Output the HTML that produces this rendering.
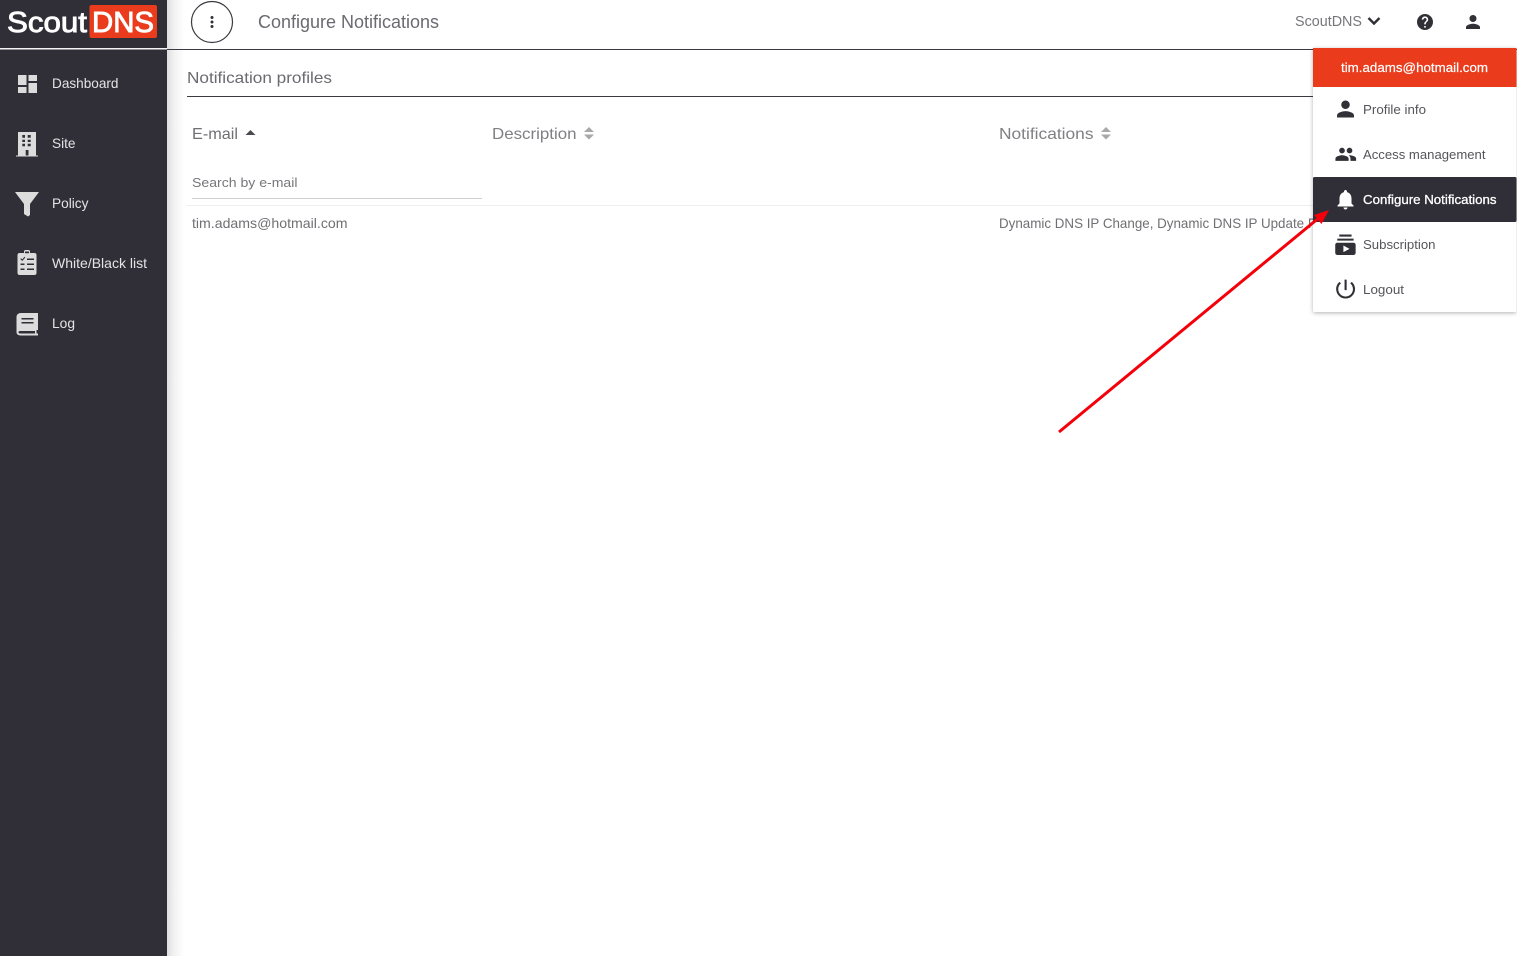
<!DOCTYPE html>
<html lang="en"><head><meta charset="utf-8"><title>Configure Notifications</title>
<style>
html,body{margin:0;padding:0;background:#fff;width:1517px;height:956px;overflow:hidden}
svg{display:block;position:absolute;left:0;top:0}
text{font-family:"Liberation Sans",sans-serif;font-size:14px;fill:#5c5c60}
.nav{fill:#e4e4e6;font-size:14px}
.ic{fill:#dcdcdc}
.m{fill:#55555a;font-size:13px}
.d{fill:#303036}
</style></head><body>
<svg width="1517" height="956" viewBox="0 0 1517 956" xmlns="http://www.w3.org/2000/svg">
<defs>
<linearGradient id="sh" x1="0" x2="1" y1="0" y2="0"><stop offset="0" stop-color="#000" stop-opacity=".13"/><stop offset=".4" stop-color="#000" stop-opacity=".05"/><stop offset="1" stop-color="#000" stop-opacity="0"/></linearGradient>
<filter id="ms" x="-10%" y="-10%" width="120%" height="120%"><feDropShadow dx="0" dy="1" stdDeviation="2" flood-color="#000" flood-opacity=".3"/></filter>
<clipPath id="rowclip"><rect x="990" y="205" width="323" height="40"/></clipPath>
</defs>
<rect x="167" y="0" width="18" height="956" fill="url(#sh)"/>
<rect x="0" y="0" width="167" height="956" fill="#302f37"/>
<rect x="0" y="48" width="167" height="1.5" fill="#f4f4f4"/>
<rect x="167" y="49" width="1350" height="1" fill="#3a3a40"/>

<!-- logo -->
<text x="7" y="32" textLength="80" lengthAdjust="spacingAndGlyphs" style="fill:#fff;font-size:29px;stroke:#fff;stroke-width:.9">Scout</text>
<rect x="89.500" y="5" width="67.500" height="33" rx="2" fill="#ea3c1c"/>
<text x="92" y="32" textLength="62" lengthAdjust="spacingAndGlyphs" style="fill:#fff;font-size:29px;stroke:#fff;stroke-width:.9">DNS</text>

<!-- nav icons -->
<path class="ic" d="M18 85h8.500V75H18zm0 8h8.500v-6H18zm10.500 0H37V83h-8.500zm0-18v6H37v-6z"/>
<path class="ic" fill-rule="evenodd" d="M18 132h18v23.500h2v1H16v-1h2zM22.300 135v2.700H25V135zm5.400 0v2.700h3V135zM22.300 139.700v2.300H25v-2.300zm5.400 0v2.300h3v-2.300zM22.300 143.700v2.500H25v-2.500zm5.400 0v2.500h3v-2.500zM25.700 150v5.500h2.800V150z"/>
<path class="ic" d="M15 192h24l-9 12v11l-2 1.500-4-2.500v-10z"/>
<path class="ic" fill-rule="evenodd" d="M19.500 253H24v-1.500c0-1 .8-1.500 1.500-1.500h3c.8 0 1.500.5 1.500 1.500V253h4.500c1 0 2 .8 2 2v18c0 1.200-1 2-2 2h-15c-1 0-2-.8-2-2v-18c0-1.200 1-2 2-2zM25 251.500v1.800h4v-1.800zM20.300 259l2 2 3-3.500-.8-.7-2.200 2.600-1.300-1.200zM27 258.500v1.500h7v-1.500zM20.500 263.500v1.500h4v-1.500zm6.500 0v1.500h7v-1.500zM20.500 268.500v1.500h4v-1.500zm6.500 0v1.500h7v-1.500z"/>
<path class="ic" fill-rule="evenodd" d="M21 313h17v17h-1.500v3.500H38v2H21c-2.500 0-4.500-1-4.500-3.500v-15c0-2.500 2-4 4.500-4zM21.500 318v1.500h12V318zM21.500 322v1.500h12V322zM20 331c-1 0-1.500.5-1.500 1.300s.5 1.200 1.500 1.200h15V331z"/>

<!-- nav labels -->
<text class="nav" x="52" y="88" textLength="66.500" lengthAdjust="spacingAndGlyphs">Dashboard</text>
<text class="nav" x="52" y="148" textLength="23.500" lengthAdjust="spacingAndGlyphs">Site</text>
<text class="nav" x="52" y="208" textLength="36.500" lengthAdjust="spacingAndGlyphs">Policy</text>
<text class="nav" x="52" y="268" textLength="95" lengthAdjust="spacingAndGlyphs">White/Black list</text>
<text class="nav" x="52" y="328" textLength="23" lengthAdjust="spacingAndGlyphs">Log</text>

<!-- header -->
<circle cx="212" cy="22" r="20.500" fill="#fff" stroke="#3a3a40" stroke-width="1.200"/>
<circle cx="212" cy="17.500" r="1.500" fill="#303036"/><circle cx="212" cy="22" r="1.500" fill="#303036"/><circle cx="212" cy="26.500" r="1.500" fill="#303036"/>
<text x="258" y="28" textLength="181" lengthAdjust="spacingAndGlyphs" style="font-size:18px;fill:#6a6a70">Configure Notifications</text>
<text x="1295" y="26" textLength="67" lengthAdjust="spacingAndGlyphs" style="font-size:14.500px;fill:#77777b">ScoutDNS</text>
<path d="M1368.500 18l5.500 5.500 5.500-5.500" fill="none" stroke="#303036" stroke-width="2.400"/>
<g transform="translate(1415.400 12.400) scale(.8)"><path class="d" d="M12 2C6.480 2 2 6.480 2 12s4.480 10 10 10 10-4.480 10-10S17.520 2 12 2zm1 17h-2v-2h2v2zm2.070-7.750l-.9.920C13.450 12.900 13 13.500 13 15h-2v-.5c0-1.100.45-2.100 1.170-2.830l1.240-1.260c.37-.36.59-.86.59-1.410 0-1.100-.9-2-2-2s-2 .9-2 2H8c0-2.210 1.790-4 4-4s4 1.790 4 4c0 .88-.36 1.680-.93 2.250z"/></g>
<g transform="translate(1462.500 11.500) scale(.875)"><path class="d" d="M12 12c2.210 0 4-1.790 4-4s-1.790-4-4-4-4 1.790-4 4 1.790 4 4 4zm0 2c-2.670 0-8 1.340-8 4v2h16v-2c0-2.660-5.330-4-8-4z"/></g>

<!-- section -->
<text x="187" y="83" textLength="145" lengthAdjust="spacingAndGlyphs" style="font-size:16px;fill:#6a6a70">Notification profiles</text>
<rect x="187" y="96" width="1130" height="1" fill="#3a3a40"/>

<!-- table header -->
<text x="192" y="139" textLength="46" lengthAdjust="spacingAndGlyphs" style="font-size:16px;fill:#707074">E-mail</text>
<path d="M245.500 135l5-5 5 5z" fill="#4a4a50"/>
<text x="492" y="139" textLength="84.500" lengthAdjust="spacingAndGlyphs" style="font-size:16px;fill:#808084">Description</text>
<path d="M584 132l5-5 5 5zM584 134.500l5 5 5-5z" fill="#a8a8a8"/>
<text x="999" y="139" textLength="94.500" lengthAdjust="spacingAndGlyphs" style="font-size:16px;fill:#808084">Notifications</text>
<path d="M1101 132l5-5 5 5zM1101 134.500l5 5 5-5z" fill="#a8a8a8"/>

<text x="192" y="187" textLength="105.500" lengthAdjust="spacingAndGlyphs" style="font-size:13px;fill:#77777b">Search by e-mail</text>
<rect x="192" y="198" width="290" height="1" fill="#cfcfcf"/>
<rect x="187" y="205" width="1130" height="1" fill="#eeeeee"/>

<text x="192" y="228" textLength="155.500" lengthAdjust="spacingAndGlyphs" style="font-size:14px;fill:#707074">tim.adams@hotmail.com</text>
<g clip-path="url(#rowclip)"><text x="999" y="228" textLength="317" lengthAdjust="spacingAndGlyphs" style="font-size:14px;fill:#707074">Dynamic DNS IP Change, Dynamic DNS IP Update F</text></g>

<!-- dropdown -->
<rect x="1313" y="48" width="203.500" height="264" rx="2" fill="#fff" filter="url(#ms)"/>
<rect x="1313" y="48" width="203.500" height="39" fill="#ea3c1c"/>
<text x="1341" y="72" textLength="147" lengthAdjust="spacingAndGlyphs" style="font-size:13px;fill:#fff;stroke:#fff;stroke-width:.2">tim.adams@hotmail.com</text>
<rect x="1313" y="177" width="203.500" height="45" rx="1.500" fill="#302f37"/>

<g transform="translate(1332.800 96.300) scale(1.060)"><path class="d" d="M12 12c2.210 0 4-1.790 4-4s-1.790-4-4-4-4 1.790-4 4 1.790 4 4 4zm0 2c-2.670 0-8 1.340-8 4v2h16v-2c0-2.660-5.330-4-8-4z"/></g>
<text class="m" x="1363" y="114" textLength="63" lengthAdjust="spacingAndGlyphs">Profile info</text>
<g transform="translate(1334.500 143) scale(.94)"><path class="d" d="M16 11c1.660 0 2.990-1.340 2.990-3S17.660 5 16 5c-1.660 0-3 1.340-3 3s1.340 3 3 3zm-8 0c1.660 0 2.990-1.340 2.990-3S9.660 5 8 5C6.340 5 5 6.340 5 8s1.340 3 3 3zm0 2c-2.330 0-7 1.170-7 3.500V19h14v-2.500c0-2.330-4.670-3.500-7-3.500zm8 0c-.29 0-.62.02-.97.05 1.160.84 1.970 1.970 1.970 3.450V19h6v-2.500c0-2.330-4.670-3.500-7-3.500z"/></g>
<text class="m" x="1363" y="159" textLength="122.500" lengthAdjust="spacingAndGlyphs">Access management</text>
<g transform="translate(1333.500 187.500) scale(1)"><path fill="#fff" d="M12 22c1.100 0 2-.9 2-2h-4c0 1.100.9 2 2 2zm6-6v-5c0-3.070-1.630-5.640-4.500-6.320V4c0-.83-.67-1.500-1.500-1.500s-1.500.67-1.500 1.500v.68C7.640 5.360 6 7.920 6 11v5l-2 2v1h16v-1l-2-2z"/></g>
<text x="1363" y="204" textLength="133.500" lengthAdjust="spacingAndGlyphs" style="font-size:13px;fill:#fff;stroke:#fff;stroke-width:.3">Configure Notifications</text>
<g transform="translate(1333.200 232.500) scale(1.020)"><path class="d" d="M20 8H4V6h16v2zm-2-6H6v2h12V2zm4 10v8c0 1.100-.9 2-2 2H4c-1.100 0-2-.9-2-2v-8c0-1.100.9-2 2-2h16c1.100 0 2 .9 2 2zm-6 4l-6-3.270v6.530L16 16z"/></g>
<text class="m" x="1363" y="249" textLength="72.500" lengthAdjust="spacingAndGlyphs">Subscription</text>
<g transform="translate(1333 276.500) scale(1.050)"><path class="d" d="M13 3h-2v10h2V3zm4.830 2.170l-1.420 1.420C17.990 7.860 19 9.810 19 12c0 3.870-3.130 7-7 7s-7-3.130-7-7c0-2.190 1.010-4.140 2.580-5.420L6.170 5.170C4.230 6.820 3 9.260 3 12c0 4.970 4.030 9 9 9s9-4.030 9-9c0-2.740-1.230-5.180-3.170-6.830z"/></g>
<text class="m" x="1363" y="294" textLength="41" lengthAdjust="spacingAndGlyphs">Logout</text>

<!-- arrow -->
<line x1="1059" y1="432" x2="1320" y2="217" stroke="#f5000a" stroke-width="3"/>
<path d="M1329 210l-7.500 14-7.500-9z" fill="#f5000a"/>
</svg>
</body></html>
